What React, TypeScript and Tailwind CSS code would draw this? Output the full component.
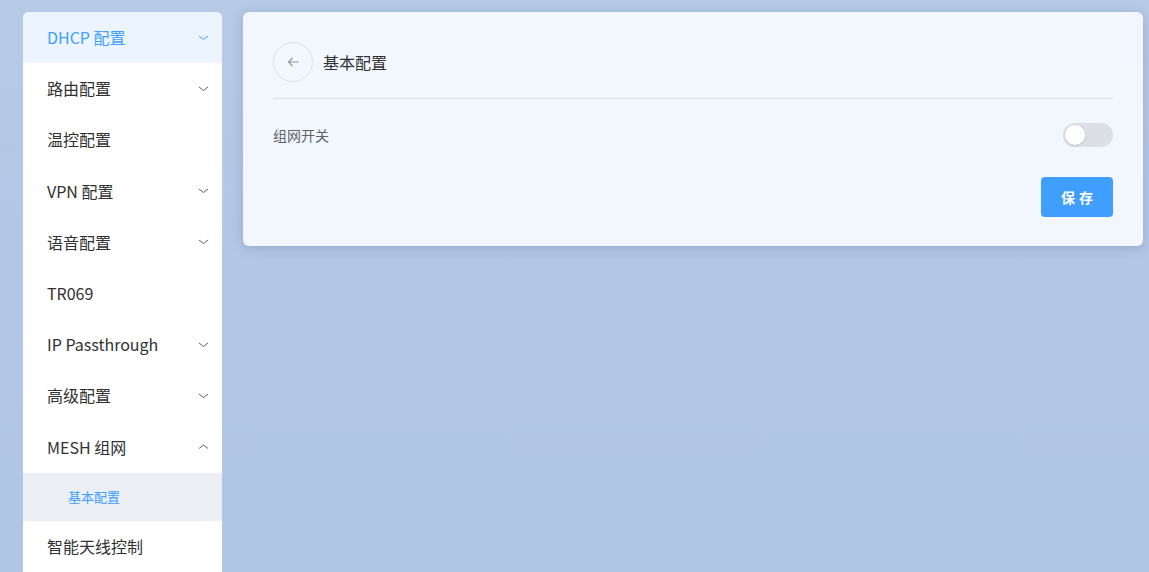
import React, { useState } from 'react';

type MenuItem = {
  label: string;
  arrow?: 'down' | 'up';
  active?: boolean;
  children?: { label: string; active?: boolean }[];
};

const menu: MenuItem[] = [
  { label: 'DHCP 配置', arrow: 'down', active: true },
  { label: '路由配置', arrow: 'down' },
  { label: '温控配置' },
  { label: 'VPN 配置', arrow: 'down' },
  { label: '语音配置', arrow: 'down' },
  { label: 'TR069' },
  { label: 'IP Passthrough', arrow: 'down' },
  { label: '高级配置', arrow: 'down' },
  { label: 'MESH 组网', arrow: 'up', children: [{ label: '基本配置', active: true }] },
  { label: '智能天线控制' },
];

const Chevron: React.FC<{ dir: 'down' | 'up'; active?: boolean }> = ({ dir, active }) => (
  <svg
    width="11"
    height="10"
    viewBox="0 0 11 10"
    className={active ? 'text-[#409eff]' : 'text-[#606266]'}
  >
    <path
      d={dir === 'down' ? 'M1 3 L5.5 6.5 L10 3' : 'M1 6.5 L5.5 3 L10 6.5'}
      fill="none"
      stroke="currentColor"
      strokeWidth="1"
    />
  </svg>
);

const Sidebar: React.FC = () => (
  <div className="w-[199px] shrink-0 bg-white rounded-t-[6px] overflow-hidden">
    {menu.map((item) => (
      <div key={item.label}>
        <div
          className={`h-[51.2px] flex items-center justify-between pl-6 pr-[13px] text-base ${
            item.active ? 'bg-[#ecf5ff] text-[#409eff]' : 'text-[#303133]'
          }`}
        >
          <span className="-mt-px">{item.label}</span>
          {item.arrow && <Chevron dir={item.arrow} active={item.active} />}
        </div>
        {item.children?.map((c) => (
          <div
            key={c.label}
            className={`h-[48px] flex items-center pl-[45px] text-[13px] bg-[#ebeef3] ${
              c.active ? 'text-[#409eff]' : 'text-[#303133]'
            }`}
          >
            {c.label}
          </div>
        ))}
      </div>
    ))}
  </div>
);

const App: React.FC = () => {
  const [on, setOn] = useState(false);

  return (
    <div
      className="min-h-[572px] h-[572px] overflow-hidden bg-gradient-to-b from-[#b7cae6] via-[#b2c7e7] to-[#b0c6e5] flex gap-[21px] pl-[23px] pt-3 pr-[6px]"
      style={{ fontFamily: '"Noto Sans CJK SC", "Noto Sans", sans-serif' }}
    >
      <Sidebar />
      <div className="flex-1 self-start h-[234px] bg-[#f2f7fe] rounded-[6px] shadow-[0_2px_12px_rgba(60,80,120,0.25)] px-[30px] pt-[30px]">
        <div className="flex items-center gap-[10px] h-[40px]">
          <button className="w-[40px] h-[40px] rounded-full border border-[#dcdfe6] flex items-center justify-center text-[#909399]">
            <svg width="13" height="12" viewBox="0 0 13 12">
              <path d="M11.5 6 H1.5 M5.5 2 L1.5 6 L5.5 10" fill="none" stroke="currentColor" strokeWidth="1.1" />
            </svg>
          </button>
          <span className="text-base text-[#303133]">基本配置</span>
        </div>
        <div className="mt-[16px] border-t border-[#dcdfe6]" />
        <div className="flex items-center justify-between mt-[24px] h-[24px]">
          <span className="text-sm text-[#606266]">组网开关</span>
          <button
            onClick={() => setOn(!on)}
            className={`w-[50px] h-[24px] rounded-full p-[2px] flex ${on ? 'bg-[#409eff] justify-end' : 'bg-[#dcdfe6] justify-start'}`}
          >
            <span className="w-[20px] h-[20px] rounded-full bg-white shadow-sm" />
          </button>
        </div>
        <div className="flex justify-end mt-[30px]">
          <button className="w-[72px] h-[40px] rounded-[4px] bg-[#409eff] text-white text-sm font-bold tracking-[4px] pl-[4px]">
            保存
          </button>
        </div>
      </div>
    </div>
  );
};

export default App;
